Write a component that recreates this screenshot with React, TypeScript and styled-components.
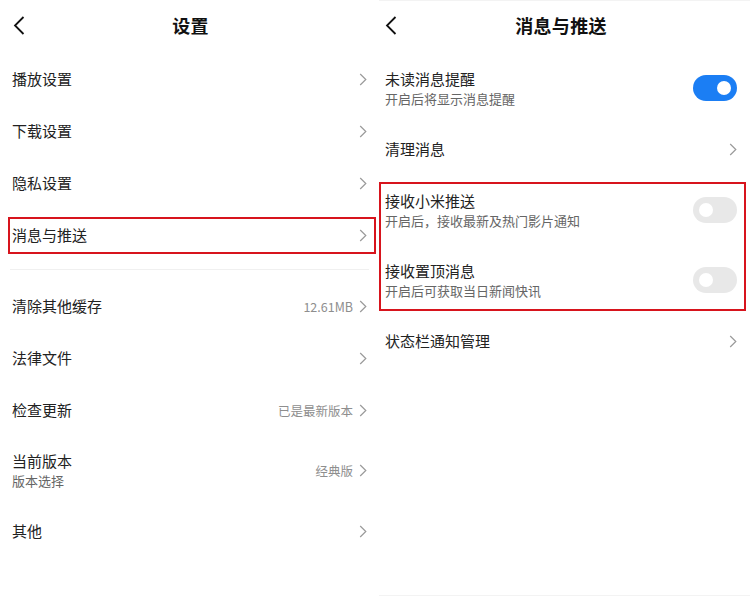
import styled, { createGlobalStyle } from "styled-components";

const GlobalStyle = createGlobalStyle`
  html, body {
    margin: 0;
    padding: 0;
    background: #ffffff;
  }
  body {
    font-family: "Noto Sans CJK SC", "Noto Sans", sans-serif;
    color: #222;
  }
`;

const Page = styled.div`
  display: flex;
  width: 750px;
  height: 596px;
  background: #fff;
  overflow: hidden;
`;

const LeftPanel = styled.section`
  width: 377px;
  flex-shrink: 0;
  display: flex;
  flex-direction: column;
`;

const RightPanel = styled.section`
  margin-left: 2px;
  flex: 1;
  display: flex;
  flex-direction: column;
  box-shadow: inset 0 1px 0 #f3f3f3, inset 0 -1px 0 #f3f3f3;
`;

const Header = styled.header<{ padLeft: number; padRight: number }>`
  position: relative;
  height: 53px;
  display: flex;
  align-items: center;
  justify-content: center;
  padding: 0 ${(p) => p.padRight}px 3px ${(p) => p.padLeft}px;
  box-sizing: border-box;
`;

const BackButton = styled.div<{ left: number }>`
  position: absolute;
  left: ${(p) => p.left}px;
  top: 16px;
  width: 12px;
  height: 19px;
  display: flex;
`;

const Title = styled.h1`
  margin: 0;
  font-size: 18px;
  font-weight: 600;
  color: #111;
  letter-spacing: 0.3px;
`;

const Row = styled.div<{ height: number; padLeft: number; padRight: number; highlighted?: boolean }>`
  position: relative;
  height: ${(p) => p.height}px;
  display: flex;
  align-items: center;
  justify-content: space-between;
  padding: 0 ${(p) => p.padRight}px 0 ${(p) => p.padLeft}px;
  box-sizing: border-box;

  ${(p) =>
    p.highlighted &&
    `
    &::after {
      content: "";
      position: absolute;
      left: 8px;
      right: 1px;
      top: 8px;
      bottom: 7px;
      border: 2px solid #d7141d;
      pointer-events: none;
    }
  `}
`;

const Highlight = styled.div`
  position: relative;

  &::after {
    content: "";
    position: absolute;
    left: 0px;
    right: 4px;
    top: 7px;
    bottom: 4px;
    border: 2px solid #d7141d;
    pointer-events: none;
  }
`;

const TextBlock = styled.div`
  display: flex;
  flex-direction: column;
  gap: 1px;
`;

const Label = styled.div`
  font-size: 15px;
  line-height: 20px;
  color: #222;
`;

const SubLabel = styled.div`
  font-size: 13px;
  line-height: 18px;
  color: #666;
`;

const Trail = styled.div`
  display: flex;
  align-items: center;
  gap: 6px;
`;

const Value = styled.span`
  font-size: 12.5px;
  color: #8e8e8e;
`;

const Divider = styled.div`
  height: 1px;
  margin: 8px 8px 10px 10px;
  background: #f0f0f0;
`;

const Toggle = styled.div<{ on: boolean }>`
  width: 44px;
  height: 26px;
  border-radius: 13px;
  background: ${(p) => (p.on ? "#1b7ef4" : "#e8e8e8")};
  display: flex;
  align-items: center;
  justify-content: ${(p) => (p.on ? "flex-end" : "flex-start")};
  padding: 0 6px;
  box-sizing: border-box;

  &::before {
    content: "";
    width: 14px;
    height: 14px;
    border-radius: 50%;
    background: #fff;
  }
`;

function Chevron() {
  return (
    <svg width="8" height="13" viewBox="0 0 8 13">
      <path d="M1.2 1 L6.8 6.5 L1.2 12" fill="none" stroke="#9a9a9a" strokeWidth="1.2" />
    </svg>
  );
}

function BackIcon() {
  return (
    <svg width="12" height="19" viewBox="0 0 12 19">
      <path d="M10.5 1 L2 9.5 L10.5 18" fill="none" stroke="#111" strokeWidth="1.8" />
    </svg>
  );
}

type SettingItem = {
  label: string;
  sub?: string;
  value?: string;
  highlighted?: boolean;
};

const topItems: SettingItem[] = [
  { label: "播放设置" },
  { label: "下载设置" },
  { label: "隐私设置" },
  { label: "消息与推送", highlighted: true },
];

const bottomItems: SettingItem[] = [
  { label: "清除其他缓存", value: "12.61MB" },
  { label: "法律文件" },
  { label: "检查更新", value: "已是最新版本" },
  { label: "当前版本", sub: "版本选择", value: "经典版" },
  { label: "其他" },
];

function SettingRow({ item }: { item: SettingItem }) {
  return (
    <Row height={item.sub ? 69 : 52} padLeft={12} padRight={10} highlighted={item.highlighted}>
      <TextBlock>
        <Label>{item.label}</Label>
        {item.sub && <SubLabel>{item.sub}</SubLabel>}
      </TextBlock>
      <Trail>
        {item.value && <Value>{item.value}</Value>}
        <Chevron />
      </Trail>
    </Row>
  );
}

function ToggleRow({ label, sub, on }: { label: string; sub: string; on: boolean }) {
  return (
    <Row height={70} padLeft={6} padRight={13}>
      <TextBlock>
        <Label>{label}</Label>
        <SubLabel>{sub}</SubLabel>
      </TextBlock>
      <Toggle on={on} />
    </Row>
  );
}

function LinkRow({ label }: { label: string }) {
  return (
    <Row height={52} padLeft={6} padRight={13}>
      <Label>{label}</Label>
      <Chevron />
    </Row>
  );
}

export default function App() {
  return (
    <>
      <GlobalStyle />
      <Page>
        <LeftPanel>
          <Header padLeft={4} padRight={0}>
            <BackButton left={13}>
              <BackIcon />
            </BackButton>
            <Title>设置</Title>
          </Header>
          {topItems.map((item) => (
            <SettingRow key={item.label} item={item} />
          ))}
          <Divider />
          {bottomItems.map((item) => (
            <SettingRow key={item.label} item={item} />
          ))}
        </LeftPanel>

        <RightPanel>
          <Header padLeft={0} padRight={7}>
            <BackButton left={6}>
              <BackIcon />
            </BackButton>
            <Title>消息与推送</Title>
          </Header>
          <ToggleRow label="未读消息提醒" sub="开启后将显示消息提醒" on />
          <LinkRow label="清理消息" />
          <Highlight>
            <ToggleRow label="接收小米推送" sub="开启后，接收最新及热门影片通知" on={false} />
            <ToggleRow label="接收置顶消息" sub="开启后可获取当日新闻快讯" on={false} />
          </Highlight>
          <LinkRow label="状态栏通知管理" />
        </RightPanel>
      </Page>
    </>
  );
}
